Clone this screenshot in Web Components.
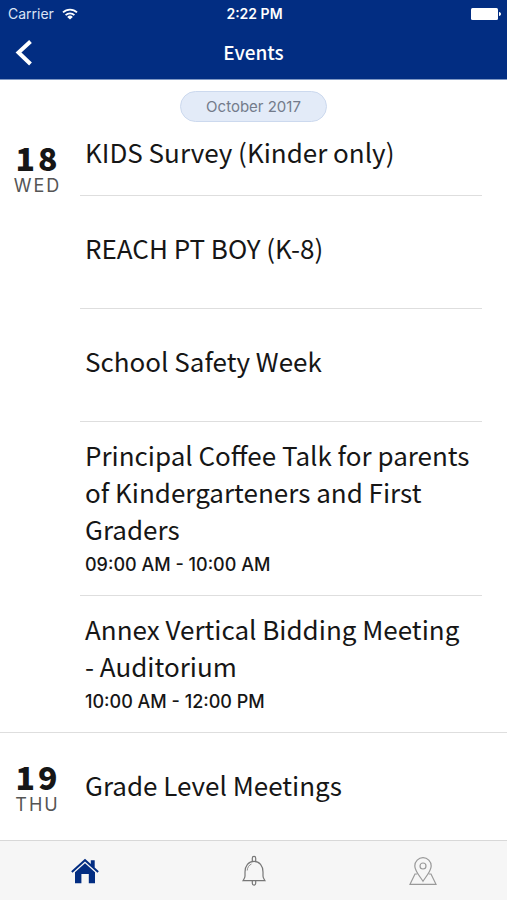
<!DOCTYPE html>
<html lang="en">
<head>
<meta charset="utf-8">
<meta name="viewport" content="width=device-width, initial-scale=1">
<title>Events</title>
<style>
    :root{
        --brand: #022d82;
        --line: #dedede;
        --ink: #161616;
        --title-font: "Noto Sans CJK JP", "Noto Sans", sans-serif;
        --ui-font: Inter, "Liberation Sans", sans-serif;
    }
    body{
        margin: 0;
        background: white;
        color: var(--ink);
        font-family: var(--ui-font);
    }
</style>
</head>
<body>
<events-screen>
    <status-bar slot="top" carrier="Carrier" time="2:22 PM"></status-bar>
    <nav-header slot="top">Events</nav-header>
    <month-pill>October 2017</month-pill>
    <day-group day="18" weekday="WED" first>
        <event-item first>KIDS Survey (Kinder only)</event-item>
        <event-item>REACH PT BOY (K-8)</event-item>
        <event-item>School Safety Week</event-item>
        <event-item time="09:00 AM - 10:00 AM">Principal Coffee Talk for parents of Kindergarteners and First Graders</event-item>
        <event-item time="10:00 AM - 12:00 PM">Annex Vertical Bidding Meeting - Auditorium</event-item>
    </day-group>
    <day-group day="19" weekday="THU">
        <event-item>Grade Level Meetings</event-item>
    </day-group>
    <tab-bar slot="bottom"></tab-bar>
</events-screen>

<script>
class BaseElement extends HTMLElement {
    connectedCallback(){
        if(this.shadowRoot) return;
        this.attachShadow({mode: 'open'}).innerHTML = this.render();
    }
}

class EventsScreen extends BaseElement {
    render(){
        return `
            <style>
                :host{
                    display: flex;
                    flex-direction: column;
                    min-height: 100vh;
                }
                header{
                    background: var(--brand);
                    color: white;
                    border-bottom: 1px solid #8098c4;
                }
                main{
                    flex: 1 1 auto;
                }
                footer{
                    position: sticky;
                    bottom: 0;
                }
            </style>
            <header><slot name="top"></slot></header>
            <main><slot></slot></main>
            <footer><slot name="bottom"></slot></footer>
        `;
    }
}

class StatusBar extends BaseElement {
    render(){
        return `
            <style>
                :host{
                    display: grid;
                    grid-template-columns: 1fr auto 1fr;
                    align-items: center;
                    height: 28px;
                    padding: 0 6px 0 8px;
                    font-size: 14px;
                    line-height: 20px;
                }
                .carrier{
                    display: flex;
                    align-items: center;
                    gap: 8px;
                    color: #dbe4f5;
                }
                .time{
                    font-weight: 600;
                }
                .battery{
                    justify-self: end;
                }
                svg{
                    display: block;
                }
            </style>
            <div class="carrier">
                <span>${this.getAttribute('carrier')}</span>
                <svg width="16" height="12" viewBox="0 0 16 12" fill="none" stroke="#ffffff" stroke-width="1.8" aria-hidden="true">
                    <path d="M1 4.4a10 10 0 0 1 14 0M3.6 7.1a6.3 6.3 0 0 1 8.8 0"/>
                    <path fill="#ffffff" stroke="none" d="M8 11.6 5.2 8.9a4 4 0 0 1 5.6 0z"/>
                </svg>
            </div>
            <div class="time">${this.getAttribute('time')}</div>
            <svg class="battery" width="30" height="12" viewBox="0 0 30 12" fill="#ffffff" aria-hidden="true">
                <rect width="27" height="12" rx="1.5"/>
                <path d="M28 4c1.3.3 2 1.1 2 2s-.7 1.7-2 2z"/>
            </svg>
        `;
    }
}

class NavHeader extends BaseElement {
    render(){
        return `
            <style>
                :host{
                    display: grid;
                    grid-template-columns: 48px 1fr 48px;
                    align-items: center;
                    height: 51px;
                }
                button{
                    display: grid;
                    place-items: center;
                    width: 48px;
                    height: 48px;
                    padding: 0;
                    background: transparent;
                    border: none;
                    color: inherit;
                }
                h1{
                    margin: 0;
                    padding-bottom: 4px;
                    text-align: center;
                    font-family: var(--title-font);
                    font-weight: 500;
                    font-size: 19px;
                    line-height: 28px;
                }
            </style>
            <button type="button" aria-label="Back">
                <svg width="18" height="30" viewBox="0 0 18 30" fill="none" stroke="currentColor" stroke-width="4" aria-hidden="true">
                    <path d="M15.500 2.500 3.500 13.500l12 11.500"/>
                </svg>
            </button>
            <h1><slot></slot></h1>
        `;
    }
}

class MonthPill extends BaseElement {
    render(){
        return `
            <style>
                :host{
                    display: flex;
                    justify-content: center;
                    padding-top: 11px;
                }
                span{
                    padding: 0 25px;
                    border: 1px solid #ccd9ee;
                    border-radius: 16px;
                    background: #e3ebf8;
                    color: #737b8b;
                    font-size: 15px;
                    line-height: 29px;
                }
            </style>
            <span><slot></slot></span>
        `;
    }
}

class DayGroup extends BaseElement {
    render(){
        return `
            <style>
                :host{
                    display: grid;
                    grid-template-columns: 80px 1fr;
                    padding-right: 25px;
                    border-bottom: 1px solid var(--line);
                }
                :host(:last-of-type){
                    border-bottom: none;
                }
                .date{
                    display: flex;
                    flex-direction: column;
                    align-items: center;
                    gap: 3px;
                    padding: 27px 7px 0 0;
                }
                :host([first]) .date{
                    padding-top: 19px;
                }
                .day{
                    font-family: var(--title-font);
                    font-weight: 900;
                    font-size: 32px;
                    line-height: 32px;
                    letter-spacing: 3px;
                    margin-right: -3px;
                }
                .weekday{
                    color: #555555;
                    font-weight: 400;
                    font-size: 18px;
                    line-height: 20px;
                    letter-spacing: 2px;
                    margin-right: -2px;
                }
            </style>
            <div class="date">
                <span class="day">${this.getAttribute('day')}</span>
                <span class="weekday">${this.getAttribute('weekday')}</span>
            </div>
            <div><slot></slot></div>
        `;
    }
}

class EventItem extends BaseElement {
    render(){
        const time = this.getAttribute('time');
        return `
            <style>
                :host{
                    display: flex;
                    flex-direction: column;
                    justify-content: center;
                    box-sizing: border-box;
                    min-height: 106px;
                    padding: 14px 10px 18px 5px;
                    border-bottom: 1px solid var(--line);
                }
                :host(:not(:last-child)){
                    min-height: 113px;
                }
                :host(:not([time]):not(:last-child)){
                    padding-bottom: 23px;
                }
                :host([first]:not(:last-child)){
                    min-height: 0;
                    padding-top: 11px;
                    padding-bottom: 25px;
                }
                :host(:last-child){
                    border-bottom: none;
                }
                :host([time]){
                    padding-bottom: 14px;
                }
                h2{
                    margin: 0;
                    font-family: var(--title-font);
                    font-weight: 400;
                    font-size: 26px;
                    line-height: 37px;
                }
                p{
                    margin: 0;
                    padding-top: 2px;
                    font-weight: 500;
                    font-size: 18px;
                    line-height: 32px;
                }
            </style>
            <h2><slot></slot></h2>
            ${time ? `<p>${time}</p>` : ''}
        `;
    }
}

class TabBar extends BaseElement {
    render(){
        return `
            <style>
                :host{
                    display: block;
                }
                nav{
                    display: grid;
                    grid-template-columns: repeat(3, 1fr);
                    height: 59px;
                    background: #f6f6f6;
                    border-top: 1px solid #d8d8d8;
                }
                a{
                    display: grid;
                    place-items: center;
                    color: #777777;
                }
                a.active{
                    color: var(--brand);
                }
            </style>
            <nav>
                <a class="active" href="#home" aria-label="Home">
                    <svg width="28" height="26" viewBox="0 0 28 26" fill="currentColor" aria-hidden="true">
                        <path d="M14 .8 19.8 6V2.2h3.9v7.3l4.100 3.700-1.300 1.500L14 3.600 1.500 14.700.2 13.200z"/>
                        <path d="M14 5.300 24 14.200V25.200h-6.200V16h-7.400v9.200H4V14.200z"/>
                    </svg>
                </a>
                <a href="#alerts" aria-label="Notifications">
                    <svg width="26" height="32" viewBox="0 0 26 32" fill="none" stroke="currentColor" stroke-width="1.2" aria-hidden="true">
                        <path d="M11.3 6.3V3.2c0-2.4 3.4-2.4 3.4 0v3.1"/>
                        <path d="M4 17c0-6 3.5-10.7 9-10.7S22 11 22 17v4c0 2 .8 2.4 2 4.7H2C3.2 23.4 4 23 4 21z"/>
                        <path d="M11.3 25.7v2.6c0 2.4 3.4 2.4 3.4 0v-2.6"/>
                        <path stroke-width=".8" d="M6.2 15.5c.3-3 1.7-5.5 4.3-6.5"/>
                    </svg>
                </a>
                <a href="#map" aria-label="Map">
                    <svg width="28" height="30" viewBox="0 0 28 30" fill="none" stroke="#999999" stroke-width="1.2" aria-hidden="true">
                        <path d="M14 25.3C11 20.5 5.8 14.8 5.8 9.9a8.2 8.2 0 0 1 16.4 0c0 4.9-5.2 10.6-8.2 15.4z"/>
                        <circle cx="14" cy="10" r="3"/>
                        <path d="M8.2 18H6L1 28.3h26L22 18h-2.2"/>
                    </svg>
                </a>
            </nav>
        `;
    }
}

customElements.define('events-screen', EventsScreen);
customElements.define('status-bar', StatusBar);
customElements.define('nav-header', NavHeader);
customElements.define('month-pill', MonthPill);
customElements.define('day-group', DayGroup);
customElements.define('event-item', EventItem);
customElements.define('tab-bar', TabBar);
</script>
</body>
</html>
